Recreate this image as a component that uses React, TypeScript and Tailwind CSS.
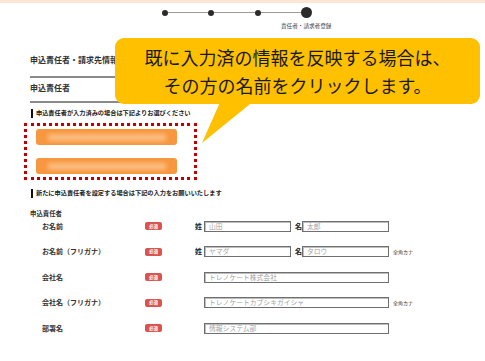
const jp = { fontFamily: '"Noto Sans CJK JP", "Noto Sans", sans-serif' };

const Step = ({ big }: { big?: boolean }) => (
  <div className={big ? "w-[11px] h-[11px] rounded-full bg-[#2b2b2b]" : "w-[6px] h-[6px] rounded-full bg-[#2b2b2b]"} />
);

const Line = () => <div className="w-[40px] h-px bg-[#9a9a9a]" />;

const Badge = () => (
  <div className="w-[17px] h-[8px] rounded-[2px] bg-[#d9534f] flex items-center justify-center text-white text-[4.5px] font-bold leading-none">
    必須
  </div>
);

const Field = ({ value, w }: { value: string; w: string }) => (
  <div className={`${w} h-[11px] border border-[#6f6f6f] shadow-[inset_1px_1px_0_#bdbdbd] bg-white flex items-center pl-[4px] text-[6.8px] text-[#a3a3a3] leading-none whitespace-nowrap`}>
    {value}
  </div>
);

const Row = ({ label, children }: { label: string; children: React.ReactNode }) => (
  <div className="flex items-center h-[11px]">
    <div className="w-[115px] pl-[12px] text-[7px] font-bold text-[#333]">{label}</div>
    <Badge />
    {children}
  </div>
);

const Kana = () => <span className="ml-[4px] text-[5px] text-[#333]">全角カナ</span>;

const Note = ({ text }: { text: string }) => (
  <div className="flex items-center h-[8px]">
    <div className="w-[2px] h-[9px] bg-[#111] ml-[1px]" />
    <span className="ml-[3px] text-[6.2px] font-bold leading-[8px] text-[#222] whitespace-nowrap">{text}</span>
  </div>
);

const Pick = () => (
  <div className="w-[141px] h-[16px] rounded-[3px] bg-[#f7973f] flex items-center justify-center">
    <div className="w-[118px] h-[7px] bg-[#fbbd80] blur-[2px]" />
  </div>
);

export default function App() {
  return (
    <div className="relative w-[485px] h-[361px] overflow-hidden bg-white" style={jp}>
      <div className="h-[3px] bg-[#fde6d6]" />

      <div className="mt-[4px] ml-[162px] flex items-center">
        <Step />
        <Line />
        <Step />
        <div className="w-[41px] h-px bg-[#9a9a9a]" />
        <Step />
        <Line />
        <Step big />
      </div>
      <div className="mt-[4px] ml-[281px] text-[5.6px] leading-[8px] text-[#444]">責任者・請求者登録</div>

      <div className="px-[30px]">
        <div className="mt-[25px] pb-[11px] border-b-2 border-[#8a8a8a] text-[8px] leading-[10px] font-bold text-[#333]">
          申込責任者・請求先情報
        </div>
        <div className="mt-[5px] pb-[8px] border-b-2 border-[#8a8a8a] text-[8px] leading-[10px] font-bold text-[#333]">
          申込責任者
        </div>

        <div className="mt-[6px]">
          <Note text="申込責任者が入力済みの場合は下記よりお選びください" />
        </div>

        <div className="mt-[6px] -ml-[6px] w-[173px] border-[3px] border-dotted border-[#c00000] pt-[3px] pb-[3px] pl-[9px] flex flex-col gap-[13px]">
          <Pick />
          <Pick />
        </div>

        <div className="mt-[9px]">
          <Note text="新たに申込責任者を設定する場合は下記の入力をお願いいたします" />
        </div>

        <div className="mt-[13px] text-[6.4px] leading-[8px] font-bold text-[#333]">申込責任者</div>

        <div className="mt-[2.5px] flex flex-col gap-[14.5px]">
          <Row label="お名前">
            <span className="ml-[33px] w-[9px] text-[7px] font-bold text-[#222]">姓</span>
            <Field value="山田" w="w-[87px]" />
            <span className="ml-[4px] w-[7px] text-[7px] font-bold text-[#222]">名</span>
            <Field value="太郎" w="w-[87px]" />
          </Row>
          <Row label="お名前（フリガナ）">
            <span className="ml-[33px] w-[9px] text-[7px] font-bold text-[#222]">姓</span>
            <Field value="ヤマダ" w="w-[87px]" />
            <span className="ml-[4px] w-[7px] text-[7px] font-bold text-[#222]">名</span>
            <Field value="タロウ" w="w-[87px]" />
            <Kana />
          </Row>
          <Row label="会社名">
            <div className="ml-[42px]" />
            <Field value="トレノケート株式会社" w="w-[185px]" />
          </Row>
          <Row label="会社名（フリガナ）">
            <div className="ml-[42px]" />
            <Field value="トレノケートカブシキガイシャ" w="w-[185px]" />
            <Kana />
          </Row>
          <Row label="部署名">
            <div className="ml-[42px]" />
            <Field value="情報システム部" w="w-[185px]" />
          </Row>
        </div>
      </div>

      <svg className="absolute left-0 top-0" width="485" height="361" viewBox="0 0 485 361">
        <polygon points="221,100 255,100 202,143" fill="#ffc000" />
      </svg>
      <div className="absolute left-[115px] top-[38px] w-[365px] h-[66px] rounded-[9px] bg-[#ffc000] flex flex-col items-center justify-center text-[18px] leading-[28px] text-[#1a1a1a]">
        <div>既に入力済の情報を反映する場合は、</div>
        <div>その方の名前をクリックします。</div>
      </div>
    </div>
  );
}
